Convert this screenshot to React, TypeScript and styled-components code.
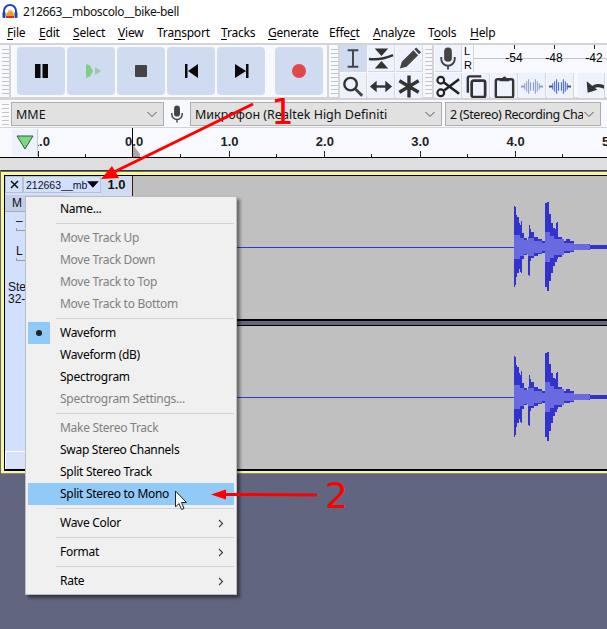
import React from "react";
import styled, { createGlobalStyle } from "styled-components";

const GlobalStyle = createGlobalStyle`
  html, body {
    margin: 0;
    padding: 0;
    background: #62657f;
  }
`;

const uiFont = `"Noto Sans", "Liberation Sans", sans-serif`;
const trackFont = `"Liberation Sans", Arial, sans-serif`;

type Env = [number, number, number];

const outerWave: Env[] = [
  [0, 41, 40], [1, 40, 38], [2, 32, 30], [3, 30, 26], [5, 24, 22], [6, 22, 25], [7, 26, 26], [8, 14, 12],
  [10, 9, 8], [13, 7, 6], [14, 10, 28], [15, 22, 29], [16, 18, 14], [17, 15, 11], [20, 10, 9], [24, 8, 7],
  [28, 6, 6], [31, 44, 40], [33, 45, 44], [35, 33, 34], [37, 24, 26], [39, 19, 19], [41, 18, 15], [42, 24, 15],
  [43, 25, 12], [44, 10, 10], [48, 8, 8], [50, 6, 6], [52, 8, 6], [56, 6, 5], [60, 3, 3], [75, 3, 3], [76, 2, 2], [96, 2, 2],
];

const innerWave: Env[] = [
  [0, 12, 12], [6, 9, 9], [10, 7, 7], [14, 9, 9], [20, 6, 6], [28, 4, 4], [31, 15, 15], [36, 11, 11],
  [40, 8, 8], [50, 4, 4], [60, 3, 3], [75, 2, 2], [76, 0, 0], [96, 0, 0],
];

function wavePath(env: Env[], x0: number, cy: number) {
  let top = `M${x0} ${cy}`;
  let bottom = "";
  env.forEach(([dx, up, down], i) => {
    const next = env[i + 1] ? env[i + 1][0] : dx;
    top += `V${cy - up}H${x0 + next}`;
    bottom = `V${cy + down}H${x0 + dx}` + bottom;
  });
  return top + bottom + "Z";
}

const Window = styled.div`
  position: relative;
  width: 607px;
  height: 629px;
  overflow: hidden;
  display: flex;
  flex-direction: column;
  background: #62657f;
  font-family: ${uiFont};
  font-size: 12px;
  color: #000;
`;

const TitleBar = styled.div`
  height: 22px;
  background: #fff;
  display: flex;
  align-items: center;
  gap: 5px;
  padding-left: 2px;
  color: #111;
  letter-spacing: -0.35px;
`;

const MenuBar = styled.div`
  height: 21px;
  background: #fff;
  display: flex;
  align-items: center;
  letter-spacing: -0.2px;
`;

const MenuLabel = styled.span<{ $w: number }>`
  width: ${(p) => p.$w}px;
  padding-left: 7px;
  box-sizing: border-box;
  white-space: nowrap;
  u {
    text-underline-offset: 2px;
  }
`;

const Dock = styled.div`
  height: 55px;
  box-sizing: border-box;
  border-top: 2px solid #d4d4d4;
  border-bottom: 1px solid #d4d4d4;
  background: #f8f9ff;
  display: flex;
`;

const Grip = styled.div<{ $w?: number }>`
  width: ${(p) => p.$w ?? 9}px;
  flex: none;
  box-sizing: border-box;
  margin-left: 2px;
  border-right: 2px solid #d4d4d4;
  background: repeating-linear-gradient(
      to bottom,
      transparent 0 2px,
      #c4c4c4 2px 3px,
      transparent 3px 4px
    )
    0 2px / 7px calc(100% - 4px) no-repeat;
`;

const TransportGroup = styled.div`
  width: 318px;
  flex: none;
  display: flex;
  gap: 2px;
  padding: 2px 0 0 6px;
  box-sizing: border-box;
  border-right: 2px solid #d4d4d4;
`;

const TransportButton = styled.div<{ $gap?: boolean }>`
  width: 48px;
  height: 48px;
  margin-left: ${(p) => (p.$gap ? 8 : 0)}px;
  border-radius: 4px;
  background: #cfdbf0;
  display: flex;
  align-items: center;
  justify-content: center;
`;

const ToolGrid = styled.div<{ $cols: number }>`
  display: grid;
  grid-template-columns: repeat(${(p) => p.$cols}, 27px);
  grid-auto-rows: 27px;
  gap: 1px;
  align-content: start;
  flex: none;
`;

const ToolButton = styled.div<{ $on?: boolean }>`
  width: 27px;
  height: 27px;
  flex: none;
  box-sizing: border-box;
  background: ${(p) => (p.$on ? "#cfdbf0" : "#eef2fc")};
  border-right: 1px solid #d6d8de;
  border-bottom: 1px solid #d6d8de;
  display: flex;
  align-items: center;
  justify-content: center;
  overflow: hidden;
`;

const ToolsWrap = styled.div`
  flex: none;
  width: 83px;
`;

const EditStack = styled.div`
  flex: 1;
  display: flex;
  flex-direction: column;
  gap: 1px;
  margin-left: 1px;
`;

const EditRow = styled.div<{ $gap?: number }>`
  display: flex;
  height: 27px;
  gap: ${(p) => p.$gap ?? 0}px;
`;

const Meter = styled.div`
  position: relative;
  flex: 1;
  display: flex;
  font-family: ${trackFont};
  font-size: 11px;
`;

const MeterSides = styled.div`
  width: 9px;
  flex: none;
  padding-left: 2px;
  border-right: 1px solid #d4d4d4;
  display: flex;
  flex-direction: column;
  justify-content: space-around;
  line-height: 13px;
`;

const MeterLine = styled.div`
  flex: 1;
  height: 13px;
  border-bottom: 1px solid #c4c4c4;
`;

const MeterScale = styled.div`
  position: absolute;
  left: 32px;
  top: 0;
  display: flex;
`;

const MeterTick = styled.div`
  width: 40px;
  height: 26px;
  display: flex;
  flex-direction: column;
  align-items: center;
  font-size: 12px;
  &::before {
    content: "";
    width: 1px;
    height: 4px;
    background: #222;
    margin-bottom: 2px;
  }
`;

const DeviceRow = styled.div`
  height: 30px;
  box-sizing: border-box;
  border-top: 2px solid #d4d4d4;
  border-bottom: 1px solid #d4d4d4;
  padding-top: 1px;
  background: #f8f9ff;
  display: flex;
  align-items: center;
  white-space: nowrap;
`;

const DeviceGrip = styled(Grip)`
  align-self: stretch;
  border-right: none;
  margin-top: -1px;
`;

const Combo = styled.div<{ $w: number; $tight?: boolean; $offset?: number }>`
  width: ${(p) => p.$w}px;
  height: 24px;
  margin-left: ${(p) => p.$offset ?? 0}px;
  box-sizing: border-box;
  flex: none;
  border: 1px solid #adadad;
  background: #e1e1e1;
  display: flex;
  align-items: center;
  padding: 0 3px 0 4px;
  font-size: 12.5px;
  letter-spacing: ${(p) => (p.$tight ? "-0.45px" : "0")};
  color: #111;
`;

const ComboText = styled.span`
  flex: 1;
  overflow: hidden;
`;

const ComboChevron = styled.svg`
  flex: none;
  margin-right: 2px;
`;

const MicSlot = styled.div`
  width: 26px;
  flex: none;
  display: flex;
  justify-content: center;
`;

const RulerRow = styled.div`
  height: 30px;
  box-sizing: border-box;
  border-bottom: 1px solid #000;
  background: #f8f9ff;
  display: flex;
  padding-left: 12px;
`;

const RulerButton = styled.div`
  width: 26px;
  height: 27px;
  margin-top: 1px;
  flex: none;
  box-sizing: border-box;
  background: #eef2fc;
  border-right: 1px solid #c8cad0;
  display: flex;
  align-items: center;
  justify-content: center;
`;

const RulerScale = styled.div`
  position: relative;
  flex: 1;
  min-width: 0;
  overflow: hidden;
  display: flex;
`;

const RulerCell = styled.div<{ $first?: boolean }>`
  position: relative;
  width: 95.4px;
  flex: none;
  margin-left: ${(p) => (p.$first ? -47 : 0)}px;
  text-align: center;
  font-family: ${trackFont};
  font-size: 13px;
  font-weight: 700;
  line-height: 15px;
  padding-top: 6px;
  box-sizing: border-box;
  color: #222;
  &::after {
    content: "";
    position: absolute;
    left: 47px;
    bottom: 0;
    width: 1px;
    height: 6px;
    background: #222;
  }
  &::before {
    content: "";
    position: absolute;
    left: 94px;
    bottom: 0;
    width: 1px;
    height: 3px;
    background: #222;
  }
`;

const PlayHead = styled.div`
  position: absolute;
  left: 94px;
  top: 0;
  bottom: 0;
  width: 1px;
  background: #000;
`;

const PlayMarker = styled.svg`
  position: absolute;
  left: 95px;
  bottom: 0;
`;

const GreyBand = styled.div`
  height: 12px;
  background: #dedede;
`;

const TrackFrame = styled.div`
  margin: 1px -12px 0 1px;
  box-shadow: 0 -1px 0 #333, 0 1px 0 #8a8a74;
  border-top: 1px solid #6a6a70;
`;

const YellowEdge = styled.div`
  border: 3px solid #f8f896;
  border-bottom-width: 2px;
`;

const TrackBody = styled.div`
  display: flex;
  border: 1px solid #000;
  border-bottom-width: 2px;
  height: 296px;
  box-sizing: border-box;
`;

const TrackPanel = styled.div`
  width: 128px;
  flex: none;
  box-sizing: border-box;
  border-right: 1px solid #3a1a1a;
  background: #d2e0ff;
  display: flex;
  flex-direction: column;
  font-family: ${trackFont};
  font-size: 12px;
  color: #111;
`;

const PanelHead = styled.div`
  display: flex;
  height: 19px;
  flex: none;
`;

const CloseButton = styled.div`
  width: 18px;
  height: 17px;
  box-sizing: border-box;
  border: 1px solid #b8c0d0;
  display: flex;
  align-items: center;
  justify-content: center;
`;

const NameButton = styled.div`
  width: 78px;
  height: 17px;
  box-sizing: border-box;
  border: 1px solid #b8c0d0;
  background: #d2e0ff;
  display: flex;
  align-items: center;
  padding-left: 2px;
  font-size: 10.5px;
  white-space: nowrap;
`;

const RateCell = styled.div`
  flex: 1;
  background: #cfdbf0;
  font-weight: 700;
  font-size: 13px;
  text-align: center;
  line-height: 15px;
  padding-top: 1px;
`;

const MuteButton = styled.div`
  height: 17px;
  width: 60px;
  flex: none;
  box-sizing: border-box;
  background: #c4d0ea;
  border-bottom: 1px solid #aab;
  padding-left: 7px;
  line-height: 16px;
`;

const SliderBlock = styled.div<{ $top: number }>`
  margin: ${(p) => p.$top}px 0 0 11px;
  flex: none;
  width: 12px;
  line-height: 12px;
  height: 24px;
  position: relative;
  &::after {
    content: "";
    position: absolute;
    left: 0;
    top: 13px;
    width: 100%;
    height: 3px;
    border: 1px solid #9a9a9a;
    border-top: none;
    box-sizing: border-box;
  }
`;

const TrackInfo = styled.div`
  margin: 12px 0 0 3px;
  line-height: 12px;
  flex: 1;
  white-space: nowrap;
`;

const CollapseBar = styled.div`
  height: 17px;
  flex: none;
  background: #d8e2f8;
  border-top: 1px solid #fff;
  border-left: 1px solid #fff;
`;

const Channels = styled.div`
  flex: 1;
  display: flex;
  flex-direction: column;
`;

const Channel = styled.div`
  height: 143px;
  flex: none;
  background: #c0c0c0;
`;

const ChannelGap = styled.div`
  flex: none;
  border-top: 2px solid #000;
  border-bottom: 1px solid #000;
  height: 4px;
  background: #62657f;
`;

const WaveSvg = styled.svg`
  display: block;
`;

const ContextMenu = styled.div`
  position: absolute;
  left: 25px;
  top: 196px;
  width: 212px;
  height: 399px;
  box-sizing: border-box;
  padding: 1px 2px;
  background: #f0f0f0;
  border: 1px solid #bdbdbd;
  box-shadow: 3px 3px 3px rgba(0, 0, 0, 0.45);
  letter-spacing: -0.28px;
  z-index: 2;
`;

const MenuRow = styled.div<{ $disabled?: boolean; $hover?: boolean }>`
  height: 22px;
  display: flex;
  align-items: center;
  background: ${(p) => (p.$hover ? "#91c9f7" : "transparent")};
  color: ${(p) => (p.$disabled ? "#6d6d6d" : "#000")};
  opacity: ${(p) => (p.$disabled ? 0.85 : 1)};
`;

const MarkCell = styled.div<{ $checked?: boolean }>`
  width: 22px;
  height: 22px;
  flex: none;
  background: ${(p) => (p.$checked ? "#91c9f7" : "transparent")};
  display: flex;
  align-items: center;
  justify-content: center;
`;

const Bullet = styled.div`
  width: 6px;
  height: 6px;
  border-radius: 50%;
  background: #222;
`;

const RowLabel = styled.span`
  flex: 1;
  margin-left: 10px;
  padding-bottom: 2px;
  white-space: nowrap;
`;

const SubArrow = styled.svg`
  width: 6px;
  height: 9px;
  margin-right: 10px;
`;

const MenuSep = styled.div`
  height: 1px;
  margin: 3px 0 3px 28px;
  background: #d4d4d4;
`;

const Annotations = styled.svg`
  position: absolute;
  left: 0;
  top: 0;
  z-index: 3;
  pointer-events: none;
`;

const Callout = styled.div<{ $x: number; $y: number }>`
  position: absolute;
  left: ${(p) => p.$x}px;
  top: ${(p) => p.$y}px;
  z-index: 4;
  color: #f00;
  font-family: "DejaVu Sans", sans-serif;
  font-size: 36px;
  line-height: 36px;
`;

const Cursor = styled.svg`
  position: absolute;
  left: 174px;
  top: 490px;
  z-index: 4;
`;

const TransportIcon = ({ children }: { children: React.ReactNode }) => (
  <svg width="30" height="30" viewBox="0 0 30 30">
    {children}
  </svg>
);

const Tool = ({ children, on }: { children: React.ReactNode; on?: boolean }) => (
  <ToolButton $on={on}>
    <svg width="27" height="27" viewBox="0 0 27 27">
      {children}
    </svg>
  </ToolButton>
);

const MicIcon = ({ color = "#444" }: { color?: string }) => (
  <>
    <rect x="9.5" y="2" width="8" height="15" rx="4" fill={color} />
    <path d="M6.5 12v2a7 7 0 0 0 14 0v-2M13.5 21v4" fill="none" stroke={color} strokeWidth="2" />
  </>
);

const WaveGlyph = ({ color, bar }: { color: string; bar: string }) => (
  <>
    <path
      d="M6 10v7M8 8v11M10 6v15M12 9v9M15 9v9M17 6v15M19 8v11M21 10v7"
      stroke={color}
      strokeWidth="1.1"
      fill="none"
    />
    <path d="M2 13.5h4M21 13.5h4" stroke={bar} strokeWidth="2" />
  </>
);

const Chevron = () => (
  <ComboChevron width="12" height="7" viewBox="0 0 12 7">
    <path d="M1.5 1l4.5 4.5L10.5 1" fill="none" stroke="#555" strokeWidth="1" />
  </ComboChevron>
);

type Item =
  | "sep"
  | { label: string; disabled?: boolean; checked?: boolean; hover?: boolean; sub?: boolean };

const menuItems: Item[] = [
  { label: "Name..." },
  "sep",
  { label: "Move Track Up", disabled: true },
  { label: "Move Track Down", disabled: true },
  { label: "Move Track to Top", disabled: true },
  { label: "Move Track to Bottom", disabled: true },
  "sep",
  { label: "Waveform", checked: true },
  { label: "Waveform (dB)" },
  { label: "Spectrogram" },
  { label: "Spectrogram Settings...", disabled: true },
  "sep",
  { label: "Make Stereo Track", disabled: true },
  { label: "Swap Stereo Channels" },
  { label: "Split Stereo Track" },
  { label: "Split Stereo to Mono", hover: true },
  "sep",
  { label: "Wave Color", sub: true },
  "sep",
  { label: "Format", sub: true },
  "sep",
  { label: "Rate", sub: true },
];

const topMenus: [React.ReactNode, number][] = [
  [<><u>F</u>ile</>, 32],
  [<><u>E</u>dit</>, 34],
  [<><u>S</u>elect</>, 45],
  [<><u>V</u>iew</>, 39],
  [<>Tra<u>n</u>sport</>, 64],
  [<><u>T</u>racks</>, 47],
  [<><u>G</u>enerate</>, 61],
  [<>Effe<u>c</u>t</>, 44],
  [<><u>A</u>nalyze</>, 55],
  [<>T<u>o</u>ols</>, 42],
  [<><u>H</u>elp</>, 40],
];

const rulerMarks = ["-1.0", "0.0", "1.0", "2.0", "3.0", "4.0", "5.0"];

function Wave() {
  return (
    <WaveSvg width="486" height="143" viewBox="0 0 486 143">
      <rect x="0" y="71" width="381" height="1" fill="#3636c4" />
      <path d={wavePath(outerWave, 381, 71)} fill="#3232cc" />
      <path d={wavePath(innerWave, 381, 71)} fill="#6a6ae0" />
    </WaveSvg>
  );
}

export default function App() {
  return (
    <Window>
      <GlobalStyle />
      <TitleBar>
        <svg width="16" height="16" viewBox="0 0 16 16">
          <path d="M2 11V8a6 6 0 0 1 12 0v3" fill="none" stroke="#1a3fc8" strokeWidth="2" />
          <rect x="0.5" y="9" width="3" height="6" rx="1" fill="#1a3fc8" />
          <rect x="12.5" y="9" width="3" height="6" rx="1" fill="#1a3fc8" />
          <path d="M4 12l1-3 1 1 1-4 1 3 1-3 1 3 1-1 1 4v2H4z" fill="#e8a020" />
          <path d="M4 13h8v2H4z" fill="#d83020" />
        </svg>
        212663__mboscolo__bike-bell
      </TitleBar>

      <MenuBar>
        {topMenus.map(([label, w], i) => (
          <MenuLabel key={i} $w={w}>
            {label}
          </MenuLabel>
        ))}
      </MenuBar>

      <Dock>
        <Grip />
        <TransportGroup>
          <TransportButton>
            <TransportIcon>
              <path d="M9 8h5.5v14H9zM16.5 8H22v14h-5.5z" fill="#0a0a0a" />
            </TransportIcon>
          </TransportButton>
          <TransportButton>
            <TransportIcon>
              <path d="M10 8l4 1.5 3 5.5-3 5.500-4 1.500z" fill="#7fcf82" />
              <path d="M19 11l6 4-6 4z" fill="#9dc8a0" />
            </TransportIcon>
          </TransportButton>
          <TransportButton>
            <TransportIcon>
              <rect x="9" y="9" width="12" height="12" rx="1" fill="#444" />
            </TransportIcon>
          </TransportButton>
          <TransportButton>
            <TransportIcon>
              <path d="M9 8h2.500v14H9zM22 8v14L12 15z" fill="#0a0a0a" />
            </TransportIcon>
          </TransportButton>
          <TransportButton>
            <TransportIcon>
              <path d="M20 8h2.500v14H20zM9 8v14l11-7z" fill="#0a0a0a" />
            </TransportIcon>
          </TransportButton>
          <TransportButton $gap>
            <TransportIcon>
              <circle cx="15" cy="15" r="7" fill="#e04848" />
            </TransportIcon>
          </TransportButton>
        </TransportGroup>

        <Grip />
        <ToolsWrap>
          <ToolGrid $cols={3}>
            <Tool on>
              <path d="M8 5h11M8 22h11M13.5 5v17" stroke="#444" strokeWidth="2" fill="none" />
            </Tool>
            <Tool>
              <path d="M7 3h14l-7 8zM7 24h14l-7-8z" fill="#333" />
              <path d="M1 14c8 1 16 0 25-4" stroke="#333" strokeWidth="2.500" fill="none" />
            </Tool>
            <Tool>
              <path d="M4 24l2-7L18 5l5 5L11 22zM19 4l2-2 5 5-2 2z" fill="#444" />
            </Tool>
            <Tool>
              <circle cx="11" cy="11" r="6.500" fill="none" stroke="#333" strokeWidth="2.500" />
              <path d="M16 16l7 7" stroke="#444" strokeWidth="3" />
            </Tool>
            <Tool>
              <path d="M8 13.500h11" stroke="#333" strokeWidth="2.500" />
              <path d="M2 13.500l7-6v12zM25 13.500l-7-6v12z" fill="#333" />
            </Tool>
            <Tool>
              <path d="M13.500 2v23M3.500 7.500l20 12M23.500 7.500l-20 12" stroke="#333" strokeWidth="3.500" />
            </Tool>
          </ToolGrid>
        </ToolsWrap>

        <Grip />
        <EditStack>
          <EditRow>
            <ToolButton>
              <svg width="27" height="27" viewBox="0 0 27 27">
                <MicIcon />
              </svg>
            </ToolButton>
            <Meter>
              <MeterSides>
                <span>L</span>
                <span>R</span>
              </MeterSides>
              <MeterLine />
              <MeterScale>
                <MeterTick>-54</MeterTick>
                <MeterTick>-48</MeterTick>
                <MeterTick>-42</MeterTick>
              </MeterScale>
            </Meter>
          </EditRow>
          <EditRow $gap={4}>
            <ToolGrid $cols={5}>
              <Tool>
                <circle cx="6" cy="7" r="3.500" fill="none" stroke="#222" strokeWidth="2.200" />
                <circle cx="6" cy="20" r="3.500" fill="none" stroke="#222" strokeWidth="2.200" />
                <path d="M9 9l16 12M9 18L25 6" stroke="#222" strokeWidth="2.600" />
              </Tool>
              <Tool>
                <path d="M5 20V5a2 2 0 0 1 2-2h12" fill="none" stroke="#333" strokeWidth="2.500" />
                <rect x="9" y="7.500" width="14" height="17" rx="2" fill="none" stroke="#333" strokeWidth="2.800" />
              </Tool>
              <Tool>
                <rect x="5" y="6" width="18" height="19" rx="2" fill="none" stroke="#333" strokeWidth="2.500" />
                <path d="M9 8V5h3a2 2 0 0 1 4 0h3v3z" fill="#333" />
              </Tool>
              <Tool>
                <WaveGlyph color="#8a9fd0" bar="#9aa0aa" />
              </Tool>
              <Tool>
                <WaveGlyph color="#4a66d8" bar="#556" />
              </Tool>
            </ToolGrid>
            <ToolButton>
              <svg width="27" height="27" viewBox="0 0 27 27">
                <path d="M13 18c3-7 11-7 19-1" fill="none" stroke="#333" strokeWidth="3.500" />
                <path d="M9 8l1 12 10-3z" fill="#333" />
              </svg>
            </ToolButton>
          </EditRow>
        </EditStack>
      </Dock>

      <DeviceRow>
        <DeviceGrip />
        <Combo $w={153}>
          <ComboText>MME</ComboText>
          <Chevron />
        </Combo>
        <MicSlot>
          <svg width="20" height="24" viewBox="0 0 27 27">
            <MicIcon />
          </svg>
        </MicSlot>
        <Combo $w={252}>
          <ComboText>Микрофон (Realtek High Definiti</ComboText>
          <Chevron />
        </Combo>
        <Combo $w={156} $tight $offset={3}>
          <ComboText>2 (Stereo) Recording Chai</ComboText>
          <Chevron />
        </Combo>
      </DeviceRow>

      <RulerRow>
        <RulerButton>
          <svg width="18" height="15" viewBox="0 0 18 15">
            <path d="M1 1h16L9 14z" fill="#7fd67f" stroke="#2f5f3f" strokeWidth="1" />
          </svg>
        </RulerButton>
        <RulerScale>
          {rulerMarks.map((mark, i) => (
            <RulerCell key={mark} $first={i === 0}>
              {mark}
            </RulerCell>
          ))}
          <PlayHead />
          <PlayMarker width="8" height="12" viewBox="0 0 8 12">
            <path d="M0 0l7 9v3H0z" fill="#a8a8a8" />
          </PlayMarker>
        </RulerScale>
      </RulerRow>

      <GreyBand />

      <TrackFrame>
        <YellowEdge>
          <TrackBody>
            <TrackPanel>
              <PanelHead>
                <CloseButton>
                  <svg width="9" height="9" viewBox="0 0 9 9">
                    <path d="M1 1l7 7M8 1L1 8" stroke="#111" strokeWidth="1.500" />
                  </svg>
                </CloseButton>
                <NameButton>
                  212663__mb
                  <svg width="14" height="7" viewBox="0 0 14 7">
                    <path d="M0 0h13L6.500 7z" fill="#000" />
                  </svg>
                </NameButton>
                <RateCell>1.0</RateCell>
              </PanelHead>
              <MuteButton>M</MuteButton>
              <SliderBlock $top={3}>–</SliderBlock>
              <SliderBlock $top={6}>L</SliderBlock>
              <TrackInfo>
                Stereo, 44100Hz
                <br />
                32-bit float
              </TrackInfo>
              <CollapseBar />
            </TrackPanel>
            <Channels>
              <Channel>
                <Wave />
              </Channel>
              <ChannelGap />
              <Channel>
                <Wave />
              </Channel>
            </Channels>
          </TrackBody>
        </YellowEdge>
      </TrackFrame>

      <ContextMenu>
        {menuItems.map((item, i) =>
          item === "sep" ? (
            <MenuSep key={i} />
          ) : (
            <MenuRow key={i} $disabled={item.disabled} $hover={item.hover}>
              <MarkCell $checked={item.checked}>{item.checked && <Bullet />}</MarkCell>
              <RowLabel>{item.label}</RowLabel>
              {item.sub && (
                <SubArrow viewBox="0 0 6 9">
                  <path d="M1 1l3.500 3.500L1 8" fill="none" stroke="#444" strokeWidth="1.200" />
                </SubArrow>
              )}
            </MenuRow>
          )
        )}
      </ContextMenu>

      <Annotations width="607" height="629" viewBox="0 0 607 629">
        <path d="M253 104L112 173" stroke="#f00" strokeWidth="3" fill="none" />
        <path d="M101 179l11-13 7 12z" fill="#f00" />
        <path d="M317 495l-95-.6" stroke="#f00" strokeWidth="3" fill="none" />
        <path d="M211 494.500l15-5v10z" fill="#f00" />
      </Annotations>
      <Callout $x={271} $y={94}>1</Callout>
      <Callout $x={325} $y={478}>2</Callout>
      <Cursor width="14" height="21" viewBox="0 0 14 21">
        <path d="M1.500 1v16l3.500-3.500 2.500 6 2.500-1-2.500-6h5z" fill="#fff" stroke="#222" strokeWidth="1" />
      </Cursor>
    </Window>
  );
}
